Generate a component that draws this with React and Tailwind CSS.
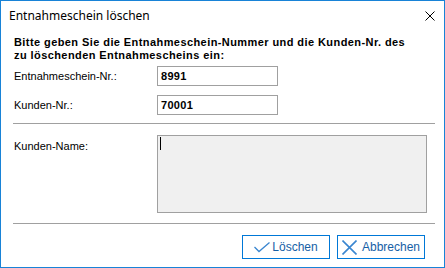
export default function App() {
  const label = "font-['Liberation_Sans',Arial,sans-serif] text-[11px] leading-[13px] text-black"
  const field =
    "h-[20px] w-[121px] border border-[#a0a0a0] bg-white pl-[3px] flex items-center font-['Liberation_Sans',Arial,sans-serif] text-[11px] font-bold text-black tracking-[0.3px]"

  return (
    <div className="w-[445px] h-[268px] border border-[#1883d7] bg-white flex flex-col overflow-hidden">
      {/* title bar */}
      <div className="h-[29px] shrink-0 flex items-center justify-between pl-[8px] pr-[9px]">
        <span className="font-['Noto_Sans','Open_Sans',sans-serif] text-[12px] text-black leading-none">
          Entnahmeschein löschen
        </span>
        <svg width="10" height="10" viewBox="0 0 10 10" className="mt-[1px]">
          <path d="M0.5 0.5 L9.5 9.5 M9.5 0.5 L0.5 9.5" stroke="#000" strokeWidth="1" fill="none" />
        </svg>
      </div>

      <div className="flex flex-col pl-[12px] pr-[9px]">
        <p className="mt-[6px] pl-[1px] font-['Liberation_Sans',Arial,sans-serif] text-[11px] leading-[13px] font-bold tracking-[0.42px] text-black">
          Bitte geben Sie die Entnahmeschein-Nummer und die Kunden-Nr. des
          <br />
          zu löschenden Entnahmescheins ein:
        </p>

        <div className="mt-[4px] flex items-center">
          <span className={`${label} w-[144px] pl-[1px]`}>Entnahmeschein-Nr.:</span>
          <div className={field}>8991</div>
        </div>
        <div className="mt-[9px] flex items-center">
          <span className={`${label} w-[144px] pl-[1px]`}>Kunden-Nr.:</span>
          <div className={field}>70001</div>
        </div>

        <div className="mt-[8px] h-px bg-[#a0a0a0]" />

        <div className="mt-[11px] flex items-start">
          <span className={`${label} w-[144px] pl-[1px] pt-[5px]`}>Kunden-Name:</span>
          <div className="h-[78px] w-[270px] border border-[#a0a0a0] bg-[#f0f0f0] pl-[2px] pt-[1px]">
            <div className="w-px h-[13px] bg-black" />
          </div>
        </div>

        <div className="mt-[10px] h-px bg-[#a0a0a0]" />

        <div className="mt-[11px] flex justify-end gap-[7px] pr-[10px]">
          <button
            type="button"
            className="h-[24px] w-[88px] border border-[#0078d7] bg-white flex items-center justify-center gap-[2px] font-['Liberation_Sans',Arial,sans-serif] text-[12px] text-[#1660a6]"
          >
            <svg width="16" height="11" viewBox="0 0 16 11">
              <path d="M0.5 5 L5 9.5 L15.5 0.5" stroke="#3a86d0" strokeWidth="1.3" fill="none" />
            </svg>
            Löschen
          </button>
          <button
            type="button"
            className="h-[24px] w-[88px] border border-[#0078d7] bg-white flex items-center justify-center gap-[5px] font-['Liberation_Sans',Arial,sans-serif] text-[12px] text-[#1660a6]"
          >
            <svg width="15" height="15" viewBox="0 0 15 15">
              <path d="M0.5 0.5 L14.5 14.5 M14.5 0.5 L0.5 14.5" stroke="#3a86d0" strokeWidth="1.6" fill="none" />
            </svg>
            Abbrechen
          </button>
        </div>
      </div>
    </div>
  )
}
